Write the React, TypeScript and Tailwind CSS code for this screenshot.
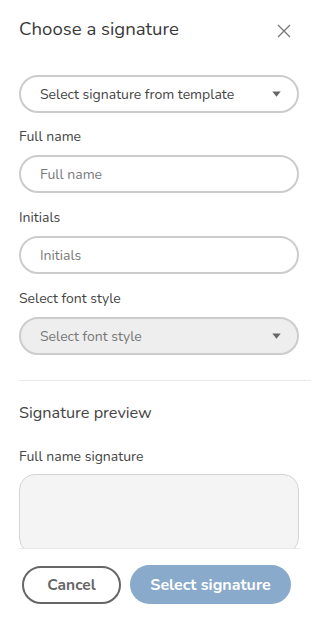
import React from "react";

const Caret = () => (
  <svg width="9" height="6" viewBox="0 0 9 6" className="shrink-0">
    <path d="M0.3 0.5 L8.7 0.5 L4.5 5.7 Z" fill="#666666" />
  </svg>
);

export default function App() {
  return (
    <div
      className="w-[319px] h-[618px] bg-white flex flex-col overflow-hidden"
      style={{ fontFamily: '"Nunito", "Lato", "Open Sans", sans-serif' }}
    >
      <div className="flex-1 overflow-hidden pl-[19px] pr-[20px]">
        <div className="flex items-center justify-between h-[24px] mt-[17px]">
          <h1 className="text-[18.6px] leading-[24px] text-[#3a3a3a]">Choose a signature</h1>
          <svg width="14" height="14" viewBox="0 0 14 14" className="mr-[8px] mt-[4px]">
            <path d="M1 1 L13 13 M13 1 L1 13" stroke="#777777" strokeWidth="1.3" />
          </svg>
        </div>

        <div className="mt-[34px] h-[38px] rounded-full border-2 border-[#cccccc] flex items-center justify-between pl-[19px] pr-[16px]">
          <span className="text-[14px] text-[#444444]">Select signature from template</span>
          <Caret />
        </div>

        <div className="mt-[15px] text-[14px] leading-[18px] text-[#444444]">Full name</div>
        <div className="mt-[9px] h-[38px] rounded-full border-2 border-[#cccccc] flex items-center pl-[19px]">
          <span className="text-[14px] text-[#7a7a7a]">Full name</span>
        </div>

        <div className="mt-[16px] text-[14px] leading-[18px] text-[#444444]">Initials</div>
        <div className="mt-[9px] h-[38px] rounded-full border-2 border-[#cccccc] flex items-center pl-[19px]">
          <span className="text-[14px] text-[#7a7a7a]">Initials</span>
        </div>

        <div className="mt-[16px] text-[14px] leading-[18px] text-[#444444]">Select font style</div>
        <div className="mt-[9px] h-[38px] rounded-full border-2 border-[#cccccc] bg-[#eeeeee] flex items-center justify-between pl-[19px] pr-[16px]">
          <span className="text-[14px] text-[#777777]">Select font style</span>
          <Caret />
        </div>

        <div className="mt-[25px] -mr-[12px] h-[1px] bg-[#e8e8e8]" />

        <div className="mt-[21px] text-[16.3px] leading-[22px] text-[#444444]">Signature preview</div>

        <div className="mt-[24px] text-[14px] leading-[18px] text-[#444444]">Full name signature</div>
        <div className="mt-[8px] h-[80px] rounded-[16px] border border-[#d4d4d4] bg-[#f4f4f4]" />
      </div>

      <div className="px-[19px]">
        <div className="border-t border-[#e8e8e8] pt-[16px] pb-[14px] flex items-center gap-[9px] pl-[3px]">
          <button className="w-[99px] h-[38px] rounded-full border-2 border-[#666666] text-[15.5px] font-bold text-[#666666]">
            Cancel
          </button>
          <button className="w-[161px] h-[39px] rounded-full bg-[#89aacb] text-[16px] font-bold text-white">
            Select signature
          </button>
        </div>
      </div>
    </div>
  );
}
